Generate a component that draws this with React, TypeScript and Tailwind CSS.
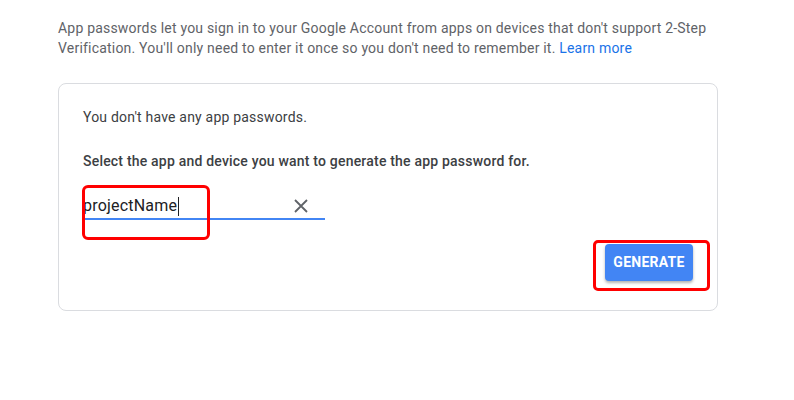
export default function App() {
  return (
    <div className="min-h-[400px] w-[794px] bg-white pl-[58px] pt-[18px] font-['Roboto',sans-serif] tracking-[0.2px]">
      <p className="w-[670px] text-[14px] leading-[20px] text-[#5f6368]">
        App passwords let you sign in to your Google Account from apps on devices that don't support 2-Step
        Verification. You'll only need to enter it once so you don't need to remember it.{" "}
        <a className="text-[#1a73e8]">Learn more</a>
      </p>

      <div className="mt-[25px] flex h-[228px] w-[660px] flex-col rounded-[8px] border border-[#dadce0] px-[24px] pt-[23px]">
        <p className="text-[14px] leading-[20px] text-[#3c4043]">You don't have any app passwords.</p>
        <p className="mt-[24px] text-[14px] font-medium leading-[20px] text-[#3c4043]">
          Select the app and device you want to generate the app password for.
        </p>

        <div className="relative mt-[23px] w-[242px]">
          <div className="flex h-[26px] items-center justify-between border-b-2 border-[#4285f4]">
            <span className="flex items-center text-[16px] leading-[24px] text-[#202124]">
              projectName
              <span className="ml-px inline-block h-[19px] w-px bg-[#202124]" />
            </span>
            <svg width="14" height="14" viewBox="0 0 14 14" className="mr-[17px]">
              <path d="M1 1L13 13M13 1L1 13" stroke="#5f6368" strokeWidth="1.8" />
            </svg>
          </div>
          <div className="absolute left-[-1px] top-[-9px] h-[55px] w-[128px] rounded-[6px] border-[3px] border-[#ff0000]" />
        </div>

        <div className="mt-[24px] flex justify-end">
          <div className="relative">
            <button className="h-[37px] w-[88px] rounded-[4px] bg-[#4285f4] text-[14px] font-bold tracking-[0.25px] text-white shadow-[0_2px_3px_rgba(0,0,0,0.3)]">
              GENERATE
            </button>
            <div className="absolute left-[-12px] top-[-4px] h-[51px] w-[117px] rounded-[5px] border-[3px] border-[#ff0000]" />
          </div>
        </div>
      </div>
    </div>
  );
}
